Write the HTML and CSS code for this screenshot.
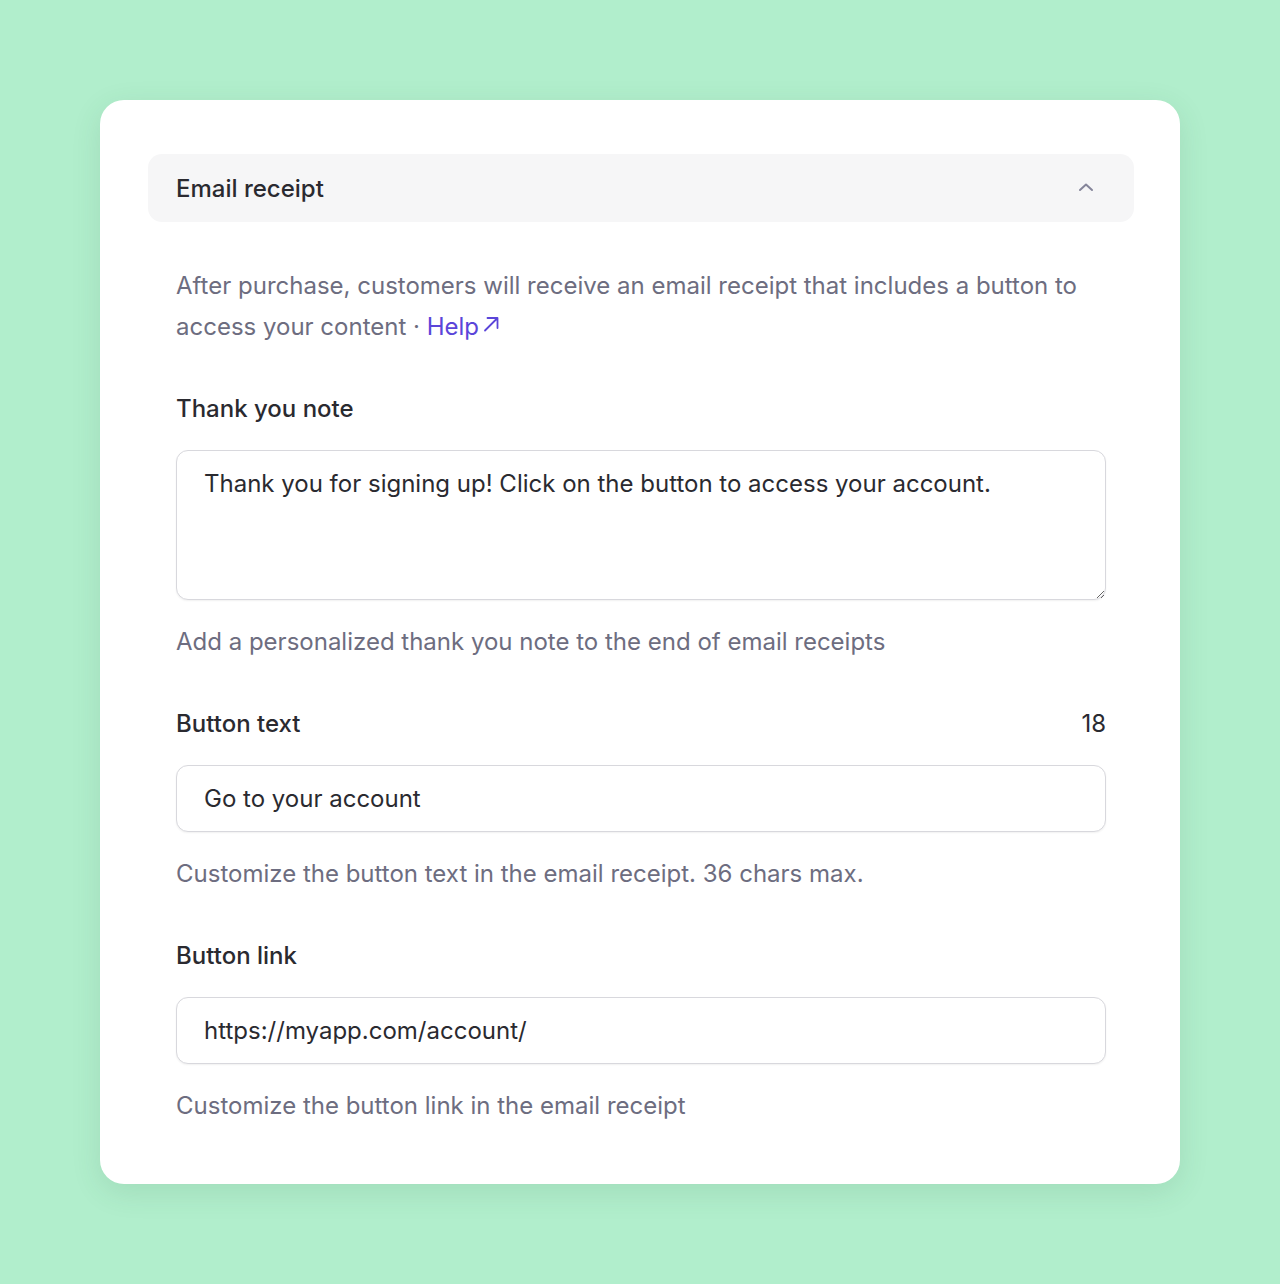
FILE: index.html
```html
<!DOCTYPE html>
<html lang="en">
<head>
  <meta charset="UTF-8" />
  <title>Email receipt</title>
  <link rel="stylesheet" href="styles.css">
</head>
<body>

<div class="card">
  <div class="section-header">
    <span class="section-title">Email receipt</span>
    <svg class="chevron" width="16" height="10" viewBox="0 0 16 10">
      <path d="M2 8 L8 2.5 L14 8" fill="none" stroke="#85859a" stroke-width="2" stroke-linecap="round" stroke-linejoin="round"/>
    </svg>
  </div>

  <div class="section-body">
    <p class="intro">
      After purchase, customers will receive an email receipt that includes a button to
      access your content &middot; <a href="#" class="help">Help</a><svg class="help-icon" width="16" height="16" viewBox="0 0 16 16"><path d="M2 14.5 L14 2.5 M4.5 2 H14.5 V12" fill="none" stroke="#5b45d9" stroke-width="1.8" stroke-linecap="round" stroke-linejoin="round"/></svg>
    </p>

    <div class="field">
      <div class="field-label"><label for="note">Thank you note</label></div>
      <textarea id="note">Thank you for signing up! Click on the button to access your account.</textarea>
      <p class="hint">Add a personalized thank you note to the end of email receipts</p>
    </div>

    <div class="field">
      <div class="field-label"><label for="btnText">Button text</label><span class="count">18</span></div>
      <input type="text" id="btnText" value="Go to your account">
      <p class="hint">Customize the button text in the email receipt. 36 chars max.</p>
    </div>

    <div class="field">
      <div class="field-label"><label for="btnLink">Button link</label></div>
      <input type="text" id="btnLink" value="https://myapp.com/account/">
      <p class="hint">Customize the button link in the email receipt</p>
    </div>
  </div>
</div>

</body>
</html>
```

FILE: styles.css
```css
body {
  font-family: Inter, "Noto Sans", sans-serif;
  background-color: #b1eecc;
  margin: 0;
  padding: 100px 100px 100px 100px;
}
.card {
  background-color: white;
  border-radius: 24px;
  padding: 54px 46px 63px 48px;
  box-shadow: 0 8px 30px rgba(40, 90, 60, 0.12);
}
.section-header {
  background-color: #f6f6f7;
  border-radius: 14px;
  height: 68px;
  padding: 0 40px 0 28px;
  display: flex;
  align-items: center;
  justify-content: space-between;
}
.section-title {
  font-size: 24px;
  font-weight: 500;
  color: #2a2a30;
}
.chevron {
  margin-top: -2px;
}
.section-body {
  padding: 0 28px;
}
.intro {
  margin: 43px 0 0 0;
  font-size: 24px;
  line-height: 41px;
  color: #6d6d80;
}
.help {
  color: #5b45d9;
  text-decoration: none;
}
.help-icon {
  vertical-align: 3px;
  margin-left: 4px;
}
.field {
  margin-top: 47px;
}
.field + .field {
  margin-top: 52px;
}
.field-label {
  display: flex;
  justify-content: space-between;
  font-size: 24px;
  line-height: 30px;
  font-weight: 500;
  color: #2a2a30;
  margin-bottom: 26px;
}
.count {
  font-weight: 400;
}
textarea, input {
  display: block;
  box-sizing: border-box;
  width: 100%;
  font-family: Inter, "Noto Sans", sans-serif;
  font-size: 24px;
  color: #2a2a30;
  border: 1.5px solid #d8d8dd;
  border-radius: 12px;
  padding: 0 27px;
  margin: 0;
  background-color: white;
  box-shadow: 0 1px 2px rgba(0, 0, 0, 0.06);
}
textarea {
  height: 150px;
  padding-top: 18px;
  line-height: 30px;
}
input {
  height: 67px;
}
.hint {
  margin: 27px 0 0 0;
  font-size: 24px;
  line-height: 30px;
  color: #6d6d80;
}
```
